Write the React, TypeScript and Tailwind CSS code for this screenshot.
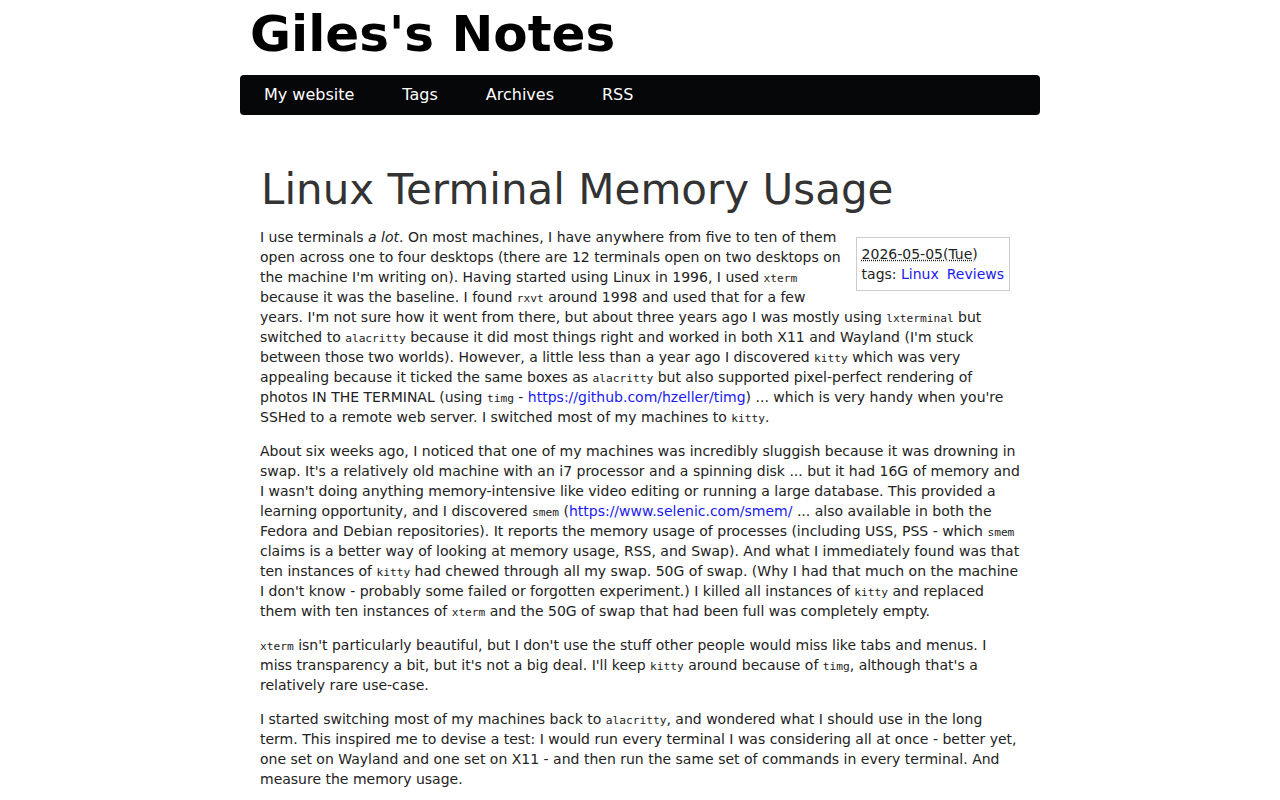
import React from "react";

const C = ({ children }: { children: React.ReactNode }) => (
  <code className="font-['DejaVu_Sans_Mono',monospace] text-[11.2px] leading-none">{children}</code>
);

const A = ({ children }: { children: React.ReactNode }) => (
  <a href="#" className="text-[#1a1aee] no-underline">{children}</a>
);

export default function App() {
  return (
    <div className="bg-white min-h-[800px] font-['DejaVu_Sans',sans-serif] text-[#222]">
      <div className="w-[800px] mx-auto">
        <h1 className="text-[50px] font-bold leading-[58px] pl-[10px] pt-[5px] pb-[12px] text-black">
          Giles's Notes
        </h1>
        <nav className="bg-[#050608] rounded-[4px] h-[40px] flex items-center">
          {["My website", "Tags", "Archives", "RSS"].map((t) => (
            <a key={t} href="#" className="px-6 text-white text-[16px] leading-[40px]">
              {t}
            </a>
          ))}
        </nav>
        <article className="px-5 pt-[50px] text-[14px] leading-[20px]">
          <h2 className="text-[42px] leading-[49px] text-[#333] font-normal mb-[13px] pl-[1px]">
            Linux Terminal Memory Usage
          </h2>
          <p className="mb-[14px]">
            <span className="float-right mt-[10px] mr-[10px] ml-[8px] mb-[4px] border border-[#ccc] px-[5px] py-[6px] leading-[20px]">
              <abbr className="underline decoration-dotted" title="2026-05-05">
                2026-05-05(Tue)
              </abbr>
              <br />
              tags: <A>Linux</A>
              <span className="inline-block w-[8px]"></span>
              <A>Reviews</A>
            </span>
            I use terminals <em>a lot</em>. On most machines, I have anywhere from five to ten of
            them open across one to four desktops (there are 12 terminals open on two desktops on
            the machine I'm writing on). Having started using Linux in 1996, I used <C>xterm</C>{" "}
            because it was the baseline. I found <C>rxvt</C> around 1998 and used that for a few
            years. I'm not sure how it went from there, but about three years ago I was mostly
            using <C>lxterminal</C> but switched to <C>alacritty</C> because it did most things
            right and worked in both X11 and Wayland (I'm stuck between those two worlds). However,
            a little less than a year ago I discovered <C>kitty</C> which was very appealing
            because it ticked the same boxes as <C>alacritty</C> but also supported pixel-perfect
            rendering of photos IN THE TERMINAL (using <C>timg</C> -{" "}
            <A>https://github.com/hzeller/timg</A>) ... which is very handy when you're SSHed to a
            remote web server. I switched most of my machines to <C>kitty</C>.
          </p>
          <p className="mb-[14px]">
            About six weeks ago, I noticed that one of my machines was incredibly sluggish because
            it was drowning in swap. It's a relatively old machine with an i7 processor and a
            spinning disk ... but it had 16G of memory and I wasn't doing anything
            memory-intensive like video editing or running a large database. This provided a
            learning opportunity, and I discovered <C>smem</C> (
            <A>https://www.selenic.com/smem/</A> ... also available in both the Fedora and Debian
            repositories). It reports the memory usage of processes (including USS, PSS - which{" "}
            <C>smem</C> claims is a better way of looking at memory usage, RSS, and Swap). And what
            I immediately found was that ten instances of <C>kitty</C> had chewed through all my
            swap. 50G of swap. (Why I had that much on the machine I don't know - probably some
            failed or forgotten experiment.) I killed all instances of <C>kitty</C> and replaced
            them with ten instances of <C>xterm</C> and the 50G of swap that had been full was
            completely empty.
          </p>
          <p className="mb-[14px]">
            <C>xterm</C> isn't particularly beautiful, but I don't use the stuff other people would
            miss like tabs and menus. I miss transparency a bit, but it's not a big deal. I'll keep{" "}
            <C>kitty</C> around because of <C>timg</C>, although that's a relatively rare use-case.
          </p>
          <p className="mb-[14px]">
            I started switching most of my machines back to <C>alacritty</C>, and wondered what I
            should use in the long term. This inspired me to devise a test: I would run every
            terminal I was considering all at once - better yet, one set on Wayland and one set on
            X11 - and then run the same set of commands in every terminal. And measure the memory
            usage.
          </p>
        </article>
      </div>
    </div>
  );
}
